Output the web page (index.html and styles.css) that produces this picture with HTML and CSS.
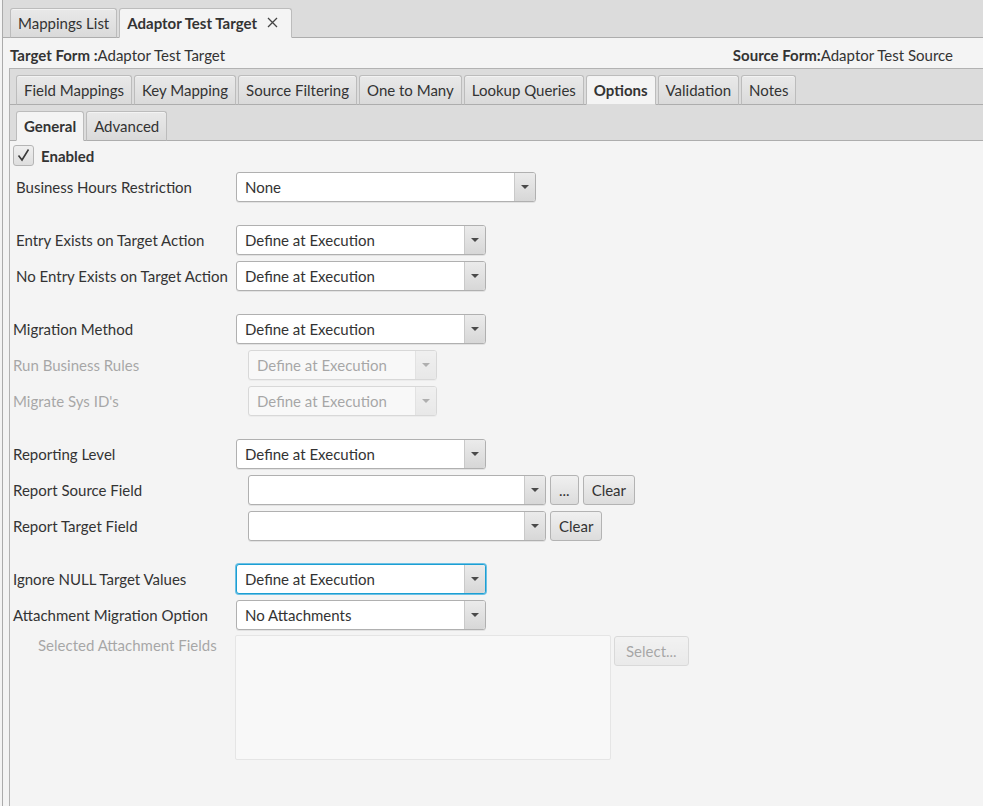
FILE: index.html
```html
<!DOCTYPE html>
<html lang="en">
<head>
    <meta charset="UTF-8">
    <title>Adaptor Test Target</title>
    <meta name="viewport" content="width=device-width, initial-scale=1.0">
    <link rel="stylesheet" href="styles.css">
</head>
<body>
    <div class="tab-pane main-pane">
        <div class="tab-header">
            <div class="tab">Mappings List</div>
            <div class="tab selected">Adaptor Test Target
                <svg class="close-icon" width="11" height="11" viewBox="0 0 11 11">
                    <path d="M1 1 L10 10 M10 1 L1 10" stroke="#444" stroke-width="1.3" fill="none"/>
                </svg>
            </div>
        </div>

        <div class="main-content">
            <div class="form-header">
                <div><b>Target Form :</b>Adaptor Test Target</div>
                <div><b>Source Form:</b>Adaptor Test Source</div>
            </div>

            <div class="tab-pane mapping-pane">
                <div class="tab-header">
                    <div class="tab">Field Mappings</div>
                    <div class="tab">Key Mapping</div>
                    <div class="tab">Source Filtering</div>
                    <div class="tab">One to Many</div>
                    <div class="tab">Lookup Queries</div>
                    <div class="tab selected">Options</div>
                    <div class="tab">Validation</div>
                    <div class="tab">Notes</div>
                </div>

                <div class="tab-pane options-pane">
                    <div class="tab-header">
                        <div class="tab selected">General</div>
                        <div class="tab">Advanced</div>
                    </div>

                    <div class="options-form">
                        <!-- Enabled + business hours -->
                        <div class="form-group">
                            <label class="checkbox-row">
                                <span class="checkbox">
                                    <svg width="15" height="15" viewBox="0 0 15 15">
                                        <path d="M2.5 7.5 L6 12 L12.5 1.5" stroke="#3a3a3a" stroke-width="1.6" fill="none"/>
                                    </svg>
                                </span>
                                Enabled
                            </label>
                            <div class="form-row">
                                <div class="field-label indent">Business Hours Restriction</div>
                                <div class="combo wide"><span class="combo-value">None</span><span class="combo-arrow"></span></div>
                            </div>
                        </div>

                        <!-- Target actions -->
                        <div class="form-group">
                            <div class="form-row">
                                <div class="field-label indent">Entry Exists on Target Action</div>
                                <div class="combo"><span class="combo-value">Define at Execution</span><span class="combo-arrow"></span></div>
                            </div>
                            <div class="form-row">
                                <div class="field-label indent">No Entry Exists on Target Action</div>
                                <div class="combo"><span class="combo-value">Define at Execution</span><span class="combo-arrow"></span></div>
                            </div>
                        </div>

                        <!-- Migration -->
                        <div class="form-group">
                            <div class="form-row">
                                <div class="field-label">Migration Method</div>
                                <div class="combo"><span class="combo-value">Define at Execution</span><span class="combo-arrow"></span></div>
                            </div>
                            <div class="form-row disabled">
                                <div class="field-label">Run Business Rules</div>
                                <div class="combo small shifted"><span class="combo-value">Define at Execution</span><span class="combo-arrow"></span></div>
                            </div>
                            <div class="form-row disabled">
                                <div class="field-label">Migrate Sys ID's</div>
                                <div class="combo small shifted"><span class="combo-value">Define at Execution</span><span class="combo-arrow"></span></div>
                            </div>
                        </div>

                        <!-- Reporting -->
                        <div class="form-group">
                            <div class="form-row">
                                <div class="field-label">Reporting Level</div>
                                <div class="combo"><span class="combo-value">Define at Execution</span><span class="combo-arrow"></span></div>
                            </div>
                            <div class="form-row">
                                <div class="field-label">Report Source Field</div>
                                <div class="combo field shifted"><span class="combo-value"></span><span class="combo-arrow"></span></div>
                                <button class="button">...</button>
                                <button class="button">Clear</button>
                            </div>
                            <div class="form-row">
                                <div class="field-label">Report Target Field</div>
                                <div class="combo field shifted"><span class="combo-value"></span><span class="combo-arrow"></span></div>
                                <button class="button">Clear</button>
                            </div>
                        </div>

                        <!-- Null values and attachments -->
                        <div class="form-group">
                            <div class="form-row">
                                <div class="field-label">Ignore NULL Target Values</div>
                                <div class="combo focused"><span class="combo-value">Define at Execution</span><span class="combo-arrow"></span></div>
                            </div>
                            <div class="form-row">
                                <div class="field-label">Attachment Migration Option</div>
                                <div class="combo"><span class="combo-value">No Attachments</span><span class="combo-arrow"></span></div>
                            </div>
                            <div class="form-row top disabled">
                                <div class="field-label attachments-label">Selected Attachment Fields</div>
                                <div class="list-box"></div>
                                <button class="button select-button">Select...</button>
                            </div>
                        </div>
                    </div>
                </div>
            </div>
        </div>
    </div>
</body>
</html>
```

FILE: styles.css
```css
body {
    margin: 0;
    background-color: #f4f4f4;
    font-family: Lato, "Open Sans", sans-serif;
    font-size: 15px;
    color: #333;
}

b {
    font-weight: bold;
}

/* Tab panes */
.main-pane {
    display: flex;
    flex-direction: column;
    margin-left: 2px;
    border-left: 1px solid #ababab;
    min-height: 100vh;
    box-sizing: border-box;
}

.tab-header {
    display: flex;
    align-items: flex-end;
    gap: 2px;
    background-color: #dcdcdc;
    border-bottom: 1px solid #adadad;
}

.main-pane > .tab-header {
    padding: 8px 0 0 7px;
}

.mapping-pane > .tab-header,
.options-pane > .tab-header {
    padding: 6px 0 0 6px;
}

.tab {
    display: flex;
    align-items: center;
    height: 30px;
    box-sizing: border-box;
    margin-bottom: -1px;
    padding: 0 7px 1px;
    border: 1px solid #bcbcbc;
    border-bottom-color: #adadad;
    border-radius: 3px 3px 0 0;
    background: linear-gradient(#e9e9e9, #dadada);
    box-shadow: inset 0 1px 0 #f3f3f3;
    white-space: nowrap;
}

.tab.selected {
    background: #f4f4f4;
    border-bottom-color: #f4f4f4;
    font-weight: bold;
    box-shadow: none;
}

.mapping-pane > .tab-header .tab.selected {
    border-bottom-color: #dcdcdc;
}

.close-icon {
    margin: 0 6px 0 10px;
}

.main-content {
    display: flex;
    flex-direction: column;
    flex: 1;
    padding-left: 6px;
}

.form-header {
    display: flex;
    justify-content: space-between;
    height: 30px;
    box-sizing: border-box;
    padding: 8px 30px 0 1px;
    line-height: 18px;
}

.mapping-pane {
    flex: 1;
    border-top: 1px solid #b2b2b2;
    border-left: 1px solid #b2b2b2;
}

/* Options form */
.options-form {
    padding: 4px 0 0 3px;
}

.form-group {
    display: flex;
    flex-direction: column;
    gap: 6px;
    margin-bottom: 23px;
}

.form-row {
    display: flex;
    align-items: center;
    gap: 4px;
    height: 30px;
}

.form-row.top {
    align-items: flex-start;
    height: auto;
}

.field-label {
    width: 223px;
    flex: none;
    margin-right: -4px;
    white-space: nowrap;
}

.field-label.indent {
    padding-left: 3px;
    box-sizing: border-box;
}

.disabled .field-label,
.disabled .combo,
.disabled .list-box,
.disabled .button {
    opacity: 0.4;
}

.checkbox-row {
    display: flex;
    align-items: center;
    gap: 7px;
    height: 21px;
    font-weight: bold;
}

.checkbox {
    display: flex;
    align-items: center;
    justify-content: center;
    width: 21px;
    height: 21px;
    box-sizing: border-box;
    border: 1px solid #b5b5b5;
    border-radius: 3px;
    background: linear-gradient(#efefef, #dedede);
}

/* Combo boxes */
.combo {
    display: flex;
    width: 250px;
    height: 30px;
    box-sizing: border-box;
    border: 1px solid #b0b0b0;
    border-radius: 3px;
    background-color: #fff;
    box-shadow: 0 1px 0 #e2e2e2;
}

.combo.wide {
    width: 300px;
}

.combo.small {
    width: 189px;
}

.combo.field {
    width: 298px;
}

.combo.shifted {
    margin-left: 12px;
}

.combo.focused {
    border-color: #1c9fd3;
    box-shadow: 0 0 0 1px #6cc0e4;
}

.combo-value {
    flex: 1;
    padding-left: 8px;
    line-height: 28px;
    white-space: nowrap;
    overflow: hidden;
}

.combo-arrow {
    display: flex;
    align-items: center;
    justify-content: center;
    width: 20px;
    border-left: 1px solid #c9c9c9;
    border-radius: 0 2px 2px 0;
    background: linear-gradient(#ebebeb, #d7d7d7);
}

.combo-arrow::after {
    content: "";
    border-left: 4px solid transparent;
    border-right: 4px solid transparent;
    border-top: 4px solid #4a4a4a;
}

/* Buttons */
.button {
    height: 30px;
    padding: 0 8px;
    border: 1px solid #b3b3b3;
    border-radius: 3px;
    background: linear-gradient(#f0f0f0, #dcdcdc);
    font-family: inherit;
    font-size: 15px;
    color: #333;
}

.attachments-label {
    padding: 0 0 0 25px;
    box-sizing: border-box;
    margin-right: -5px;
}

.list-box {
    width: 376px;
    height: 125px;
    margin-top: -1px;
    box-sizing: border-box;
    border: 1px solid #cfcfcf;
    border-radius: 2px;
    background-color: #fff;
}

.select-button {
    margin-left: -1px;
    padding: 0 11px;
}
```
